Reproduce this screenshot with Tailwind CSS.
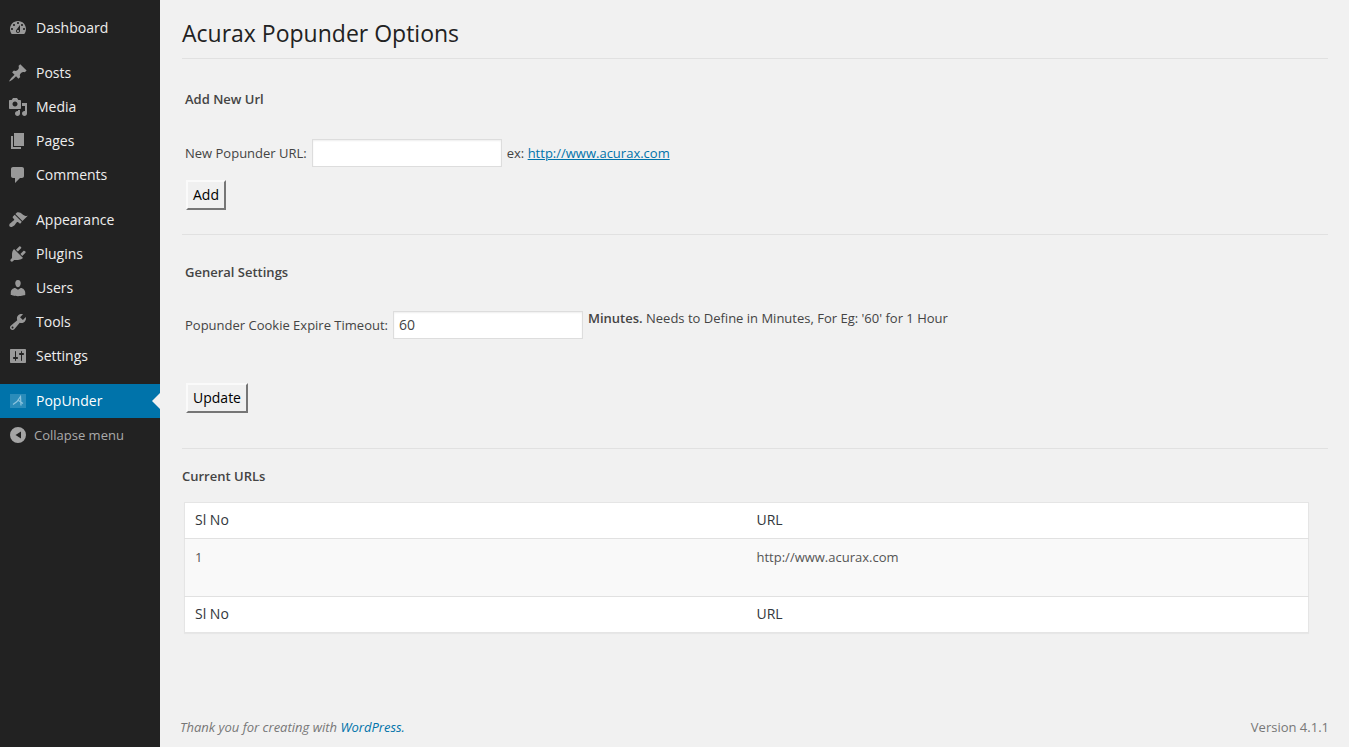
<!DOCTYPE html>
<html lang="en">
<head>
    <meta charset="UTF-8">
    <meta name="viewport" content="width=device-width, initial-scale=1.0">
    <title>Acurax Popunder Options</title>
    <script src="https://cdn.jsdelivr.net/npm/@tailwindcss/browser@4"></script>
</head>
<body class="bg-[#f1f1f1] font-['Open_Sans',sans-serif] text-[13px] leading-[19px] text-[#444]">
<div class="flex h-[747px] overflow-hidden">
    <!-- Sidebar -->
    <aside class="w-[160px] shrink-0 bg-[#222] pt-[11px] text-[14px] text-[#eee]">
        <a class="flex h-[34px] items-center gap-[8px] pb-[2px] pl-[8px]">
            <svg class="size-[20px] translate-y-px fill-[#999]" viewBox="0 0 20 20"><path d="M3.76 16h12.48c1.1-1.37 1.76-3.11 1.76-5 0-4.42-3.58-8-8-8s-8 3.58-8 8c0 1.89.66 3.63 1.76 5zM10 4c.55 0 1 .45 1 1s-.45 1-1 1-1-.45-1-1 .45-1 1-1zM6 6c.55 0 1 .45 1 1s-.45 1-1 1-1-.45-1-1 .45-1 1-1zm8 0c.55 0 1 .45 1 1s-.45 1-1 1-1-.45-1-1 .45-1 1-1zm-5.37 5.55L12 7v6c0 1.1-.9 2-2 2s-2-.9-2-2c0-.57.24-1.08.63-1.45zM4 10c.55 0 1 .45 1 1s-.45 1-1 1-1-.45-1-1 .45-1 1-1zm12 0c.55 0 1 .45 1 1s-.45 1-1 1-1-.45-1-1 .45-1 1-1zm-5 3c0-.55-.45-1-1-1s-1 .45-1 1 .45 1 1 1 1-.45 1-1z"/></svg>
            Dashboard
        </a>
        <div class="mt-[11px]">
            <a class="flex h-[34px] items-center gap-[8px] pb-[2px] pl-[8px]">
                <svg class="size-[20px] translate-y-px fill-[#999]" viewBox="0 0 20 20"><path d="M10.44 3.02l1.82-1.82 6.36 6.35-1.83 1.82c-1.05-.68-2.48-.57-3.41.36l-.75.75c-.92.93-1.04 2.35-.35 3.41l-1.83 1.82-2.41-2.41-2.8 2.79c-.42.42-3.38 2.71-3.8 2.29s1.86-3.39 2.28-3.81l2.79-2.79L4.1 9.36l1.83-1.82c1.05.69 2.48.57 3.4-.36l.75-.75c.93-.92 1.05-2.35.36-3.41z"/></svg>
                Posts
            </a>
            <a class="flex h-[34px] items-center gap-[8px] pb-[2px] pl-[8px]">
                <svg class="size-[20px] translate-y-px fill-[#999]" viewBox="0 0 20 20"><path d="M13 11V4c0-.55-.45-1-1-1h-1.67L9 1H5L3.67 3H2c-.55 0-1 .45-1 1v7c0 .55.45 1 1 1h10c.55 0 1-.45 1-1zM7 4.5c1.38 0 2.5 1.12 2.5 2.5S8.38 9.5 7 9.5 4.5 8.38 4.5 7 5.62 4.5 7 4.5zM14 6h5v10.5c0 1.38-1.12 2.5-2.5 2.5S14 17.88 14 16.5s1.12-2.5 2.5-2.5c.17 0 .34.02.5.05V9h-3V6zm-4 8.05V13h2v3.5c0 1.38-1.12 2.5-2.5 2.5S7 17.88 7 16.5 8.12 14 9.5 14c.17 0 .34.02.5.05z"/></svg>
                Media
            </a>
            <a class="flex h-[34px] items-center gap-[8px] pb-[2px] pl-[8px]">
                <svg class="size-[20px] translate-y-px fill-[#999]" viewBox="0 0 20 20"><path d="M6 15V2h10v13H6zm-1 1h8v2H3V5h2v11z"/></svg>
                Pages
            </a>
            <a class="flex h-[34px] items-center gap-[8px] pb-[2px] pl-[8px]">
                <svg class="size-[20px] translate-y-px fill-[#999]" viewBox="0 0 20 20"><path d="M5 2h9c1.1 0 2 .9 2 2v7c0 1.1-.9 2-2 2h-2l-5 5v-5H5c-1.1 0-2-.9-2-2V4c0-1.1.9-2 2-2z"/></svg>
                Comments
            </a>
        </div>
        <div class="mt-[11px]">
            <a class="flex h-[34px] items-center gap-[8px] pb-[2px] pl-[8px]">
                <svg class="size-[20px] translate-y-px fill-[#999]" viewBox="0 0 20 20"><path d="M14.48 11.06L7.41 3.99l1.5-1.5c.5-.56 2.3-.47 3.51.32 1.21.8 1.43 1.28 2.91 2.1 1.18.64 2.45 1.26 4.45.85zm-.71.71L6.7 4.7 4.93 6.47c-.39.39-.39 1.02 0 1.41l1.06 1.06c.39.39.39 1.03 0 1.42-.6.6-1.43 1.11-2.21 1.69-.35.26-.7.53-1.01.84C1.43 13.23.78 15.6 1.68 16.5c.9.9 3.27.25 4.61-1.09.31-.31.58-.66.84-1.01.58-.78 1.09-1.61 1.69-2.21.39-.39 1.03-.39 1.42 0l1.06 1.06c.39.39 1.02.39 1.41 0z"/></svg>
                Appearance
            </a>
            <a class="flex h-[34px] items-center gap-[8px] pb-[2px] pl-[8px]">
                <svg class="size-[20px] translate-y-px fill-[#999]" viewBox="0 0 20 20"><path d="M13.11 4.36L9.87 7.6 8 5.73l3.24-3.24c.35-.34 1.05-.2 1.56.32.52.51.66 1.21.31 1.55zm-8 1.77l.91-1.12 9.01 9.01-1.19.84c-.71.71-2.63 1.16-3.82 1.16H6.14L4.9 17.26c-.59.59-1.54.59-2.12 0-.59-.58-.59-1.53 0-2.12l1.24-1.24v-3.88c0-1.13.4-3.19 1.09-3.89zm7.26 3.97l3.24-3.24c.34-.35 1.04-.21 1.55.31.52.51.66 1.21.31 1.55l-3.24 3.25z"/></svg>
                Plugins
            </a>
            <a class="flex h-[34px] items-center gap-[8px] pb-[2px] pl-[8px]">
                <svg class="size-[20px] translate-y-px fill-[#999]" viewBox="0 0 20 20"><path d="M10 9.25c-2.27 0-2.73-3.44-2.73-3.44C7 4.02 7.82 2 9.97 2c2.16 0 2.98 2.02 2.71 3.81 0 0-.41 3.44-2.68 3.44zm0 2.57L12.72 10c2.39 0 4.52 2.33 4.52 4.53v2.49s-3.65 1.13-7.24 1.13c-3.65 0-7.24-1.13-7.24-1.13v-2.49c0-2.25 1.94-4.48 4.47-4.48z"/></svg>
                Users
            </a>
            <a class="flex h-[34px] items-center gap-[8px] pb-[2px] pl-[8px]">
                <svg class="size-[20px] translate-y-px fill-[#999]" viewBox="0 0 20 20"><path d="M16.68 9.77c-1.34 1.34-3.3 1.67-4.95.99l-5.41 6.52c-.99.99-2.59.99-3.58 0s-.99-2.59 0-3.57l6.52-5.42c-.68-1.65-.35-3.61.99-4.95 1.28-1.28 3.12-1.62 4.72-1.06l-2.89 2.89 2.82 2.82 2.86-2.87c.53 1.58.18 3.39-1.08 4.65zM3.81 16.21c.4.39 1.04.39 1.43 0 .4-.4.4-1.04 0-1.43-.39-.4-1.03-.4-1.43 0-.39.39-.39 1.03 0 1.43z"/></svg>
                Tools
            </a>
            <a class="flex h-[34px] items-center gap-[8px] pb-[2px] pl-[8px]">
                <svg class="size-[20px] translate-y-px fill-[#999]" viewBox="0 0 20 20"><path d="M18 16V4c0-.55-.45-1-1-1H3c-.55 0-1 .45-1 1v12c0 .55.45 1 1 1h14c.55 0 1-.45 1-1zM8 11h1c.55 0 1 .45 1 1s-.45 1-1 1H8v1.5c0 .28-.22.5-.5.5s-.5-.22-.5-.5V13H6c-.55 0-1-.45-1-1s.45-1 1-1h1V5.5c0-.28.22-.5.5-.5s.5.22.5.5V11zm5-2h-1c-.55 0-1-.45-1-1s.45-1 1-1h1V5.5c0-.28.22-.5.5-.5s.5.22.5.5V7h1c.55 0 1 .45 1 1s-.45 1-1 1h-1v5.5c0 .28-.22.5-.5.5s-.5-.22-.5-.5V9z"/></svg>
                Settings
            </a>
        </div>
        <a class="relative mt-[11px] flex h-[34px] items-center gap-[8px] bg-[#0073aa] pb-[2px] pl-[8px] text-white">
            <svg class="size-[20px] translate-y-px" viewBox="0 0 20 20"><rect x="2" y="3" width="16" height="14" fill="#2a8cba"/><path d="M5 13.5 9 10.5 12.5 5.5 13 14.5M10.5 9.5 15 12.5" fill="none" stroke="#8cc4de" stroke-width="1.2"/></svg>
            PopUnder
            <span class="absolute right-0 top-[9px] border-y-[8px] border-r-[8px] border-y-transparent border-r-[#f1f1f1]"></span>
        </a>
        <a class="flex h-[36px] items-center gap-[7px] pb-[2px] pl-[9px] text-[13px] text-[#aaa]">
            <svg class="size-[18px] fill-[#a5a5a5]" viewBox="0 0 18 18"><path fill-rule="evenodd" d="M9 1a8 8 0 1 1 0 16A8 8 0 0 1 9 1zm3 4.5L6.5 9l5.5 3.5z"/></svg>
            Collapse menu
        </a>
    </aside>

    <!-- Main -->
    <main class="flex min-w-0 flex-1 flex-col pl-[22px] pr-[21px]">
        <h1 class="border-b border-[#e1e1e1] pb-[9px] pt-[17px] text-[23px] leading-[32px] text-[#222]">Acurax Popunder Options</h1>

        <section class="h-[176px] border-b border-[#e1e1e1] pl-[3px]">
            <h3 class="mt-[31px] font-semibold leading-[19px]">Add New Url</h3>
            <div class="mt-[30px] flex h-[28px] items-center">
                <label>New Popunder URL:</label>
                <input type="text" class="ml-[5px] h-[28px] w-[190px] border border-[#ddd] bg-white px-[5px] shadow-[inset_0_1px_2px_rgba(0,0,0,0.07)]">
                <span class="ml-[5px]">ex: <a class="text-[#0073aa] underline">http://www.acurax.com</a></span>
            </div>
            <button class="ml-px mt-[13px] block h-[30px] w-[40px] border-2 border-b-[#767676] border-l-[#fafafa] border-r-[#767676] border-t-[#fafafa] bg-[#f0f0f0] pb-[2px] text-[14px] text-black">Add</button>
        </section>

        <section class="h-[214px] border-b border-[#e1e1e1] pl-[3px]">
            <h3 class="mt-[28px] font-semibold leading-[19px]">General Settings</h3>
            <div class="mt-[27px] flex items-start">
                <label class="mt-[7px]">Popunder Cookie Expire Timeout:</label>
                <input type="text" value="60" class="ml-[5px] mt-[2px] h-[28px] w-[190px] border border-[#ddd] bg-white px-[5px] pb-[2px] text-[14px] shadow-[inset_0_1px_2px_rgba(0,0,0,0.07)]">
                <span class="ml-[5px]"><b class="font-semibold">Minutes.</b> Needs to Define in Minutes, For Eg: '60' for 1 Hour</span>
            </div>
            <button class="ml-px mt-[44px] block h-[30px] w-[62px] border-2 border-b-[#767676] border-l-[#fafafa] border-r-[#767676] border-t-[#fafafa] bg-[#f0f0f0] pb-[2px] text-[14px] text-black">Update</button>
        </section>

        <h3 class="mt-[18px] font-semibold leading-[19px]">Current URLs</h3>

        <table class="ml-[2px] mt-[16px] w-[1125px] table-fixed border border-[#e5e5e5] bg-white shadow-[0_1px_1px_rgba(0,0,0,0.04)]">
            <thead>
                <tr class="h-[36px] border-b border-[#e1e1e1] text-left text-[14px]">
                    <th class="w-[562px] px-[10px] pb-[2px] font-normal text-[#32373c]">Sl No</th>
                    <th class="px-[10px] pb-[2px] font-normal text-[#32373c]">URL</th>
                </tr>
            </thead>
            <tbody>
                <tr class="h-[58px] bg-[#f9f9f9] align-top">
                    <td class="px-[10px] py-[9px] text-[#555]">1</td>
                    <td class="px-[10px] py-[9px] text-[#555]">http://www.acurax.com</td>
                </tr>
            </tbody>
            <tfoot>
                <tr class="h-[36px] border-t border-[#e1e1e1] text-left text-[14px]">
                    <th class="px-[10px] pb-[2px] font-normal text-[#32373c]">Sl No</th>
                    <th class="px-[10px] pb-[2px] font-normal text-[#32373c]">URL</th>
                </tr>
            </tfoot>
        </table>

        <footer class="-ml-[2px] -mr-px mt-auto flex justify-between pb-[10px] text-[#777]">
            <p class="italic">Thank you for creating with <a class="text-[#0073aa]">WordPress.</a></p>
            <p>Version 4.1.1</p>
        </footer>
    </main>
</div>
</body>
</html>
